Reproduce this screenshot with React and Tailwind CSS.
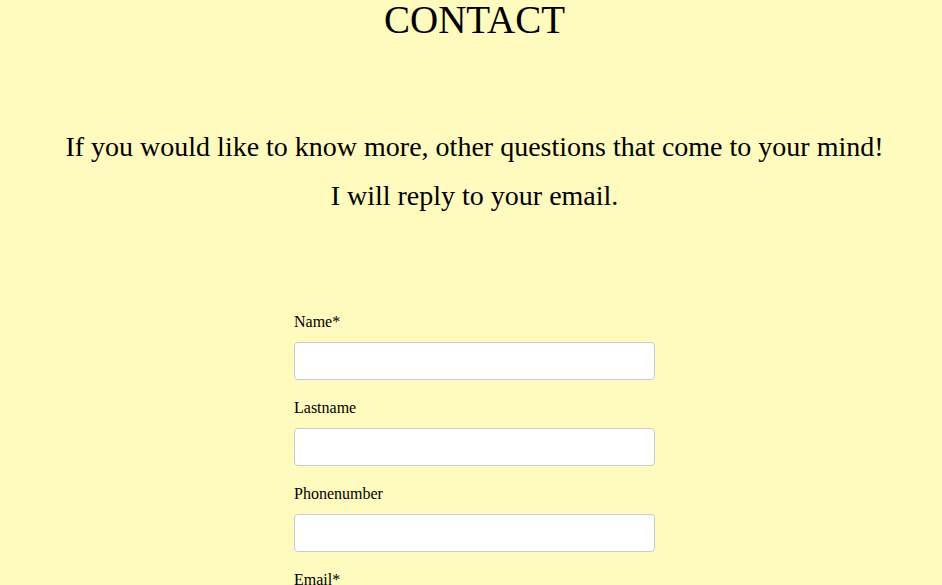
import React from "react";

// Campos del formulario de contacto
const fields = [
  { label: "Name*", name: "name", type: "text" },
  { label: "Lastname", name: "lastname", type: "text" },
  { label: "Phonenumber", name: "phone", type: "tel" },
  { label: "Email*", name: "email", type: "email" },
  { label: "Message*", name: "message", type: "text" },
];

export default function App() {
  return (
    <div className="min-h-screen bg-[#fffabe] text-black font-['Liberation_Serif','Times_New_Roman',serif] pl-[7px] flex flex-col items-center">
      {/* Título */}
      <h1 className="text-[39px] leading-none font-normal">CONTACT</h1>

      {/* Texto de introducción */}
      <div className="mt-[83px] text-[28px] leading-[49px] text-center">
        <p>If you would like to know more, other questions that come to your mind!</p>
        <p>I will reply to your email.</p>
      </div>

      {/* Formulario */}
      <form className="mt-[93px] w-[361px] flex flex-col">
        {fields.map((f) => (
          <div key={f.name} className="flex flex-col mb-[19px]">
            <label htmlFor={f.name} className="text-[16px] leading-[18px] mb-[11px]">
              {f.label}
            </label>
            <input
              id={f.name}
              name={f.name}
              type={f.type}
              className="h-[38px] w-full bg-white border border-[#c6cbd4] rounded-[4px] px-2 outline-none"
            />
          </div>
        ))}
      </form>
    </div>
  );
}
